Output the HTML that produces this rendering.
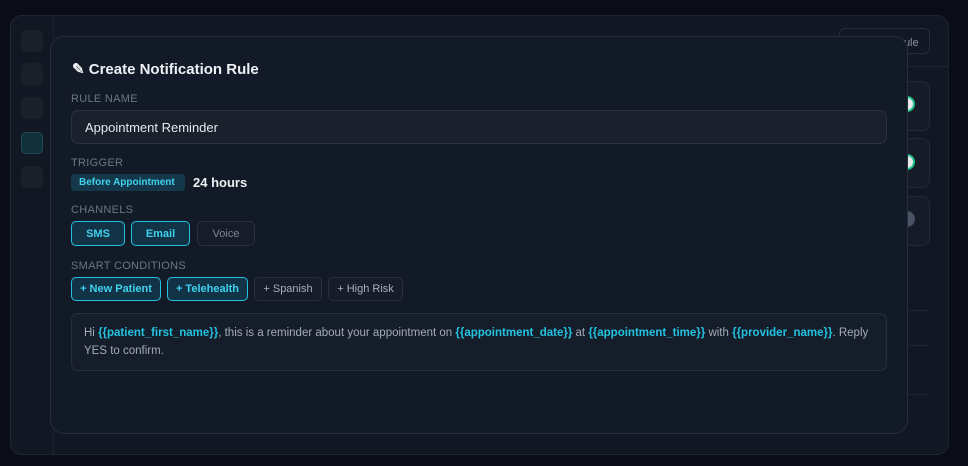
<!DOCTYPE html>
<html><head><meta charset="utf-8"><style>
*{box-sizing:border-box;margin:0;padding:0}
body{width:968px;height:466px;overflow:hidden;background:#0a0d15;font-family:"Liberation Sans",sans-serif;position:relative;
background-image:linear-gradient(rgba(255,255,255,0.012) 1px,transparent 1px),linear-gradient(90deg,rgba(255,255,255,0.012) 1px,transparent 1px);background-size:40px 40px}
.abs{position:absolute}
.panel{left:10px;top:15px;width:939px;height:440px;background:#111723;border:1px solid #1f2633;border-radius:12px}
.side{left:53px;top:16px;width:1px;height:438px;background:#1c2330}
.sq{left:21px;width:22px;height:22px;border-radius:5px;background:#1a1f2a}
.card{left:860px;width:70px;height:50px;border:1px solid #232a37;border-radius:8px;background:#151b27}
.modal{left:50px;top:36px;width:858px;height:398px;background:#131a27;border:1px solid #262e3c;border-radius:14px}
.lbl{left:71px;font-size:11px;color:#6b7587;letter-spacing:.3px}
.box{background:#1a202c;border:1px solid #2a3240;border-radius:7px}
.btn{top:221px;height:25px;border-radius:5px;font-size:11px;font-weight:bold;display:flex;align-items:center;justify-content:center}
.on{background:#123246;border:1px solid #22c3e0;color:#3fd2ee}
.off{background:#161c28;border:1px solid #29303d;color:#7c8595}
.chip{top:277px;height:24px;border-radius:5px;font-size:11px;display:flex;align-items:center;justify-content:center}
.v{color:#22c3e0;font-weight:bold}
</style></head><body>
<div class="abs panel"></div>
<div class="abs side"></div>
<div class="abs sq" style="top:30px"></div>
<div class="abs sq" style="top:63px"></div>
<div class="abs sq" style="top:97px"></div>
<div class="abs sq" style="top:132px;background:#12303a;border:1px solid #1c4b55"></div>
<div class="abs sq" style="top:166px"></div>
<div class="abs" style="left:54px;top:66px;width:894px;height:1px;background:#1f2633"></div>
<div class="abs" style="left:839px;top:28px;width:91px;height:26px;border:1px solid #262d3a;border-radius:6px;color:#8a93a3;font-size:11px;padding:8px 0 0 56px">Rule</div>
<div class="abs card" style="top:81px"></div>
<div class="abs card" style="top:138px"></div>
<div class="abs card" style="top:196px"></div>
<div class="abs" style="left:899px;top:96px;width:16px;height:16px;border-radius:50%;background:#e6e8ea;border:2px solid #22c38a"></div>
<div class="abs" style="left:899px;top:154px;width:16px;height:16px;border-radius:50%;background:#e6e8ea;border:2px solid #22c38a"></div>
<div class="abs" style="left:899px;top:211px;width:16px;height:16px;border-radius:50%;background:#4a5363"></div>
<div class="abs" style="left:908px;top:310px;width:22px;height:1px;background:#1f2633"></div>
<div class="abs" style="left:908px;top:345px;width:22px;height:1px;background:#1f2633"></div>
<div class="abs" style="left:908px;top:394px;width:22px;height:1px;background:#1f2633"></div>
<div class="abs modal"></div>
<div class="abs" style="left:72px;top:60px;font-size:15px;font-weight:bold;color:#eef0f3">✎ Create Notification Rule</div>
<div class="abs lbl" style="top:93px">RULE NAME</div>
<div class="abs box" style="left:71px;top:110px;width:816px;height:34px;color:#e6e8ec;font-size:13px;padding:9px 0 0 13px">Appointment Reminder</div>
<div class="abs lbl" style="top:157px">TRIGGER</div>
<div class="abs" style="left:71px;top:174px;width:114px;height:17px;background:#14384a;border-radius:3px;color:#3fd2ee;font-size:10px;font-weight:bold;padding:3px 0 0 8px">Before Appointment</div>
<div class="abs" style="left:193px;top:175px;font-size:13px;font-weight:bold;color:#eef0f3">24 hours</div>
<div class="abs lbl" style="top:204px">CHANNELS</div>
<div class="abs btn on" style="left:71px;width:54px">SMS</div>
<div class="abs btn on" style="left:131px;width:59px">Email</div>
<div class="abs btn off" style="left:197px;width:58px;font-weight:normal">Voice</div>
<div class="abs lbl" style="top:260px">SMART CONDITIONS</div>
<div class="abs chip on" style="left:71px;width:90px;font-weight:bold">+ New Patient</div>
<div class="abs chip on" style="left:167px;width:81px;font-weight:bold">+ Telehealth</div>
<div class="abs chip off" style="left:254px;width:68px;color:#a7aebb">+ Spanish</div>
<div class="abs chip off" style="left:328px;width:75px;color:#a7aebb">+ High Risk</div>
<div class="abs" style="left:71px;top:313px;width:816px;height:58px;background:#161d2a;border:1px solid #262e3c;border-radius:7px;padding:10px 12px;font-size:11.5px;line-height:18px;color:#a3abb8">Hi <span class="v">{{patient_first_name}}</span>, this is a reminder about your appointment on <span class="v">{{appointment_date}}</span> at <span class="v">{{appointment_time}}</span> with <span class="v">{{provider_name}}</span>. Reply YES to confirm.</div>
</body></html>
